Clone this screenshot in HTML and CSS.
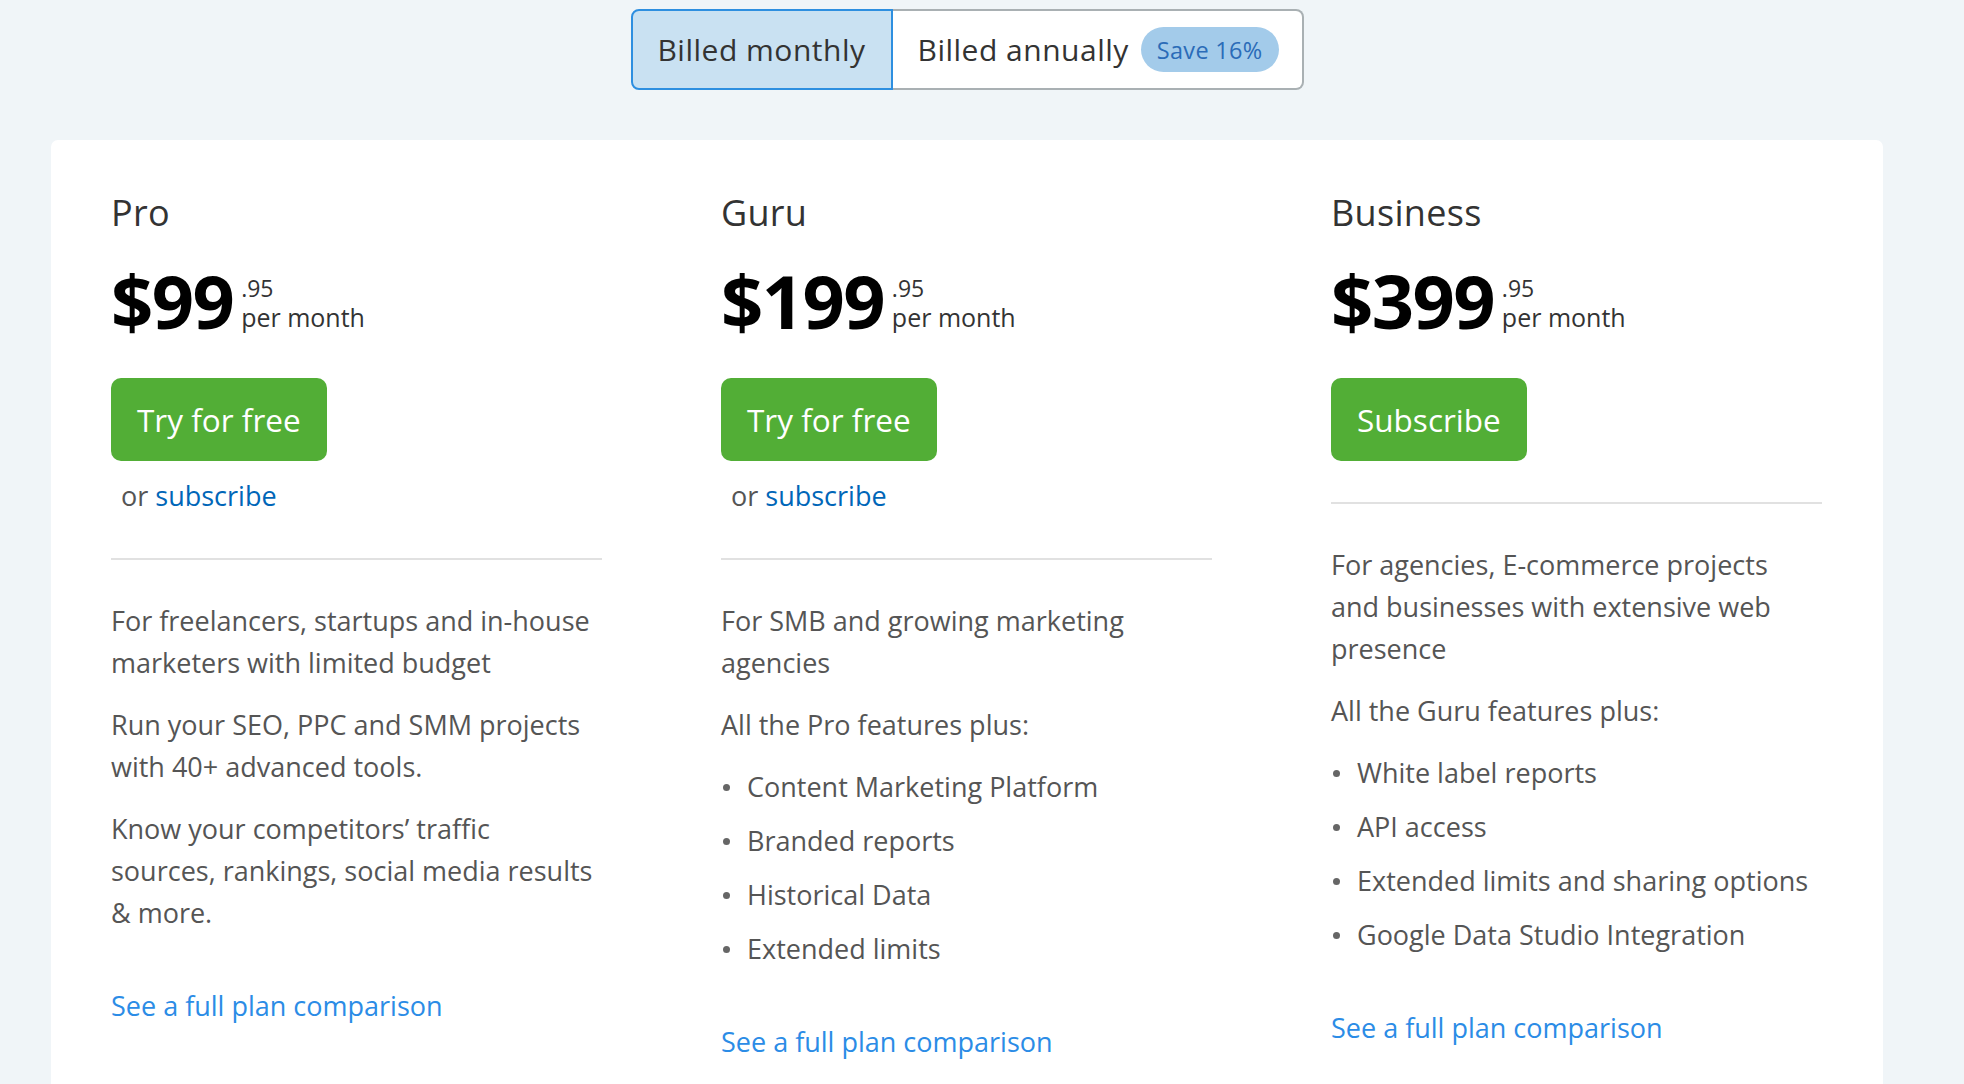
FILE: index.html
```html
<!DOCTYPE html>
<html lang="en">
<head>
<meta charset="utf-8">
<title>Pricing</title>
<link rel="stylesheet" href="styles.css">
</head>
<body>
<div class="page">
  <div class="toggle">
    <button class="seg seg-active">Billed monthly</button>
    <button class="seg seg-annual">Billed annually <span class="pill">Save 16%</span></button>
  </div>

  <div class="card">
    <section class="plan">
      <h2 class="plan-name">Pro</h2>
      <div class="price">
        <span class="amount">$99</span>
        <span class="meta"><span class="cents">.95</span><span class="period">per month</span></span>
      </div>
      <a class="btn" href="#">Try for free</a>
      <p class="alt">or <a href="#">subscribe</a></p>
      <hr class="divider">
      <div class="desc">
        <p>For freelancers, startups and in-house marketers with limited budget</p>
        <p>Run your SEO, PPC and SMM projects with 40+ advanced tools.</p>
        <p>Know your competitors’ traffic sources, rankings, social media results &amp; more.</p>
      </div>
      <a class="compare" href="#">See a full plan comparison</a>
    </section>

    <section class="plan">
      <h2 class="plan-name">Guru</h2>
      <div class="price">
        <span class="amount">$199</span>
        <span class="meta"><span class="cents">.95</span><span class="period">per month</span></span>
      </div>
      <a class="btn" href="#">Try for free</a>
      <p class="alt">or <a href="#">subscribe</a></p>
      <hr class="divider">
      <div class="desc">
        <p>For SMB and growing marketing agencies</p>
        <p>All the Pro features plus:</p>
        <ul class="features">
          <li>Content Marketing Platform</li>
          <li>Branded reports</li>
          <li>Historical Data</li>
          <li>Extended limits</li>
        </ul>
      </div>
      <a class="compare" href="#">See a full plan comparison</a>
    </section>

    <section class="plan">
      <h2 class="plan-name">Business</h2>
      <div class="price">
        <span class="amount">$399</span>
        <span class="meta"><span class="cents">.95</span><span class="period">per month</span></span>
      </div>
      <a class="btn" href="#">Subscribe</a>
      <hr class="divider">
      <div class="desc">
        <p>For agencies, E-commerce projects and businesses with extensive web presence</p>
        <p>All the Guru features plus:</p>
        <ul class="features">
          <li>White label reports</li>
          <li>API access</li>
          <li>Extended limits and sharing options</li>
          <li>Google Data Studio Integration</li>
        </ul>
      </div>
      <a class="compare" href="#">See a full plan comparison</a>
    </section>
  </div>
</div>
</body>
</html>
```

FILE: styles.css
```css
* { box-sizing: border-box; }

html, body {
  margin: 0;
  padding: 0;
  background: #f0f5f8;
  font-family: "Open Sans", "Noto Sans", sans-serif;
  color: #333;
}

.page {
  width: 1832px;
  margin-left: 51px;
  padding-top: 9px;
  display: flex;
  flex-direction: column;
  align-items: center;
}

/* ---------- billing toggle ---------- */
.toggle {
  display: flex;
  height: 81px;
}

.seg {
  font-family: inherit;
  font-size: 30px;
  letter-spacing: 0.5px;
  color: #333;
  background: #fff;
  margin: 0;
  display: flex;
  align-items: center;
  cursor: pointer;
}

.seg-active {
  width: 262px;
  justify-content: center;
  background: #c9e1f2;
  border: 2px solid #2e8fe0;
  border-radius: 8px 0 0 8px;
}

.seg-annual {
  width: 411px;
  padding: 0 23px 0 25px;
  justify-content: space-between;
  border: 2px solid #a9b0b3;
  border-left: none;
  border-radius: 0 8px 8px 0;
}

.pill {
  display: inline-flex;
  align-items: center;
  height: 45px;
  padding: 0 16px;
  border-radius: 23px;
  background: #a3cbea;
  color: #2b6cb8;
  font-size: 23.5px;
  letter-spacing: 0.3px;
}

/* ---------- card ---------- */
.card {
  align-self: stretch;
  margin-top: 50px;
  background: #fff;
  border-radius: 7px;
  padding: 51px 61px 60px 60px;
  display: grid;
  grid-template-columns: repeat(3, 491px);
  column-gap: 119px;
  align-items: start;
}

.plan {
  display: flex;
  flex-direction: column;
  align-items: flex-start;
}

.plan-name {
  margin: 0;
  font-size: 36px;
  line-height: 44px;
  font-weight: 400;
  letter-spacing: 0.3px;
  color: #333;
}

.price {
  margin-top: 26px;
  display: flex;
  height: 80px;
}

.amount {
  font-size: 74px;
  line-height: 80px;
  font-weight: 700;
  color: #000;
  letter-spacing: -1.6px;
}

.meta {
  display: flex;
  flex-direction: column;
  align-self: flex-end;
  margin: 0 0 9px 8px;
  white-space: nowrap;
}

.cents {
  font-size: 23px;
  line-height: 29px;
}

.period {
  font-size: 25px;
  line-height: 29px;
}

.btn {
  margin-top: 37px;
  height: 83px;
  padding: 0 26px;
  display: inline-flex;
  align-items: center;
  background: #52ae36;
  color: #fff;
  border-radius: 10px;
  font-size: 31.5px;
  text-decoration: none;
}

.alt {
  margin: 14px 0 0 10px;
  font-size: 27px;
  line-height: 42px;
  color: #555;
}

.alt a {
  color: #0066b8;
  text-decoration: none;
}

.divider {
  align-self: stretch;
  margin: 41px 0 0 0;
  border: none;
  height: 2px;
  background: #e1e1e1;
}

.desc {
  margin-top: 40px;
  max-width: 486px;
  font-size: 27px;
  line-height: 42px;
  color: #555;
}

.desc p {
  margin: 0 0 20px 0;
}

.desc p:last-child {
  margin-bottom: 0;
}

.features {
  list-style: none;
  margin: 0;
  padding: 0;
}

.features li {
  display: flex;
  align-items: center;
  margin-top: 12px;
}

.features li:first-child {
  margin-top: 0;
}

.features li::before {
  content: "";
  flex: none;
  width: 7px;
  height: 7px;
  border-radius: 50%;
  background: #666;
  margin: 0 17px 0 2px;
}

.compare {
  margin-top: 51px;
  font-size: 27px;
  line-height: 42px;
  color: #2b8ce6;
  text-decoration: none;
}
```
